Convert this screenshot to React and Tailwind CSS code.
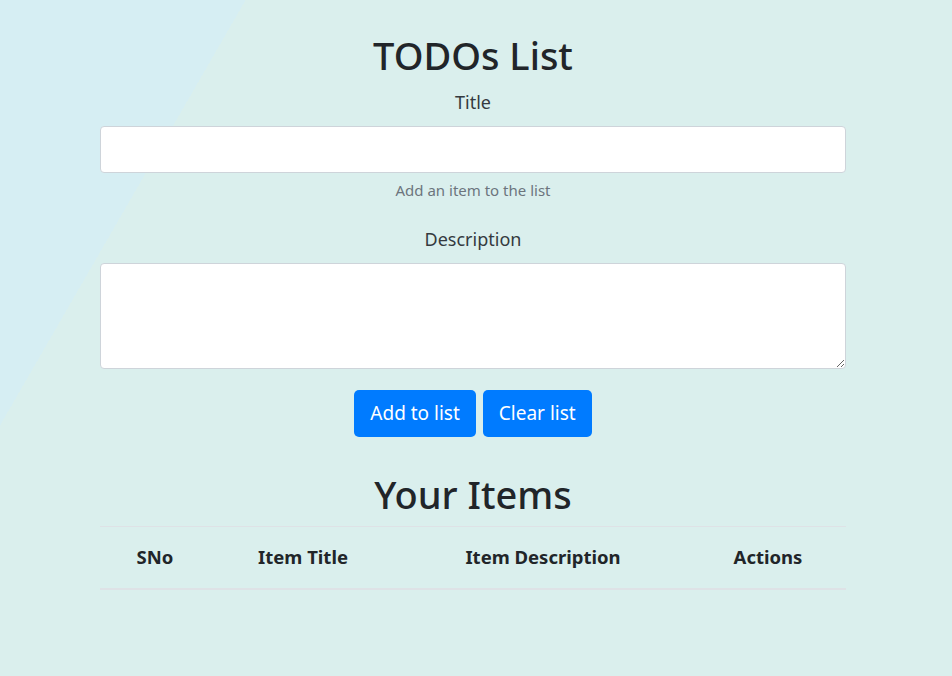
import React from 'react';

export default function App() {
  return (
    <div
      className="min-h-screen h-[676px] w-full bg-[linear-gradient(120deg,#d6eef3_18.3%,#daefed_18.3%)] text-[#212529]"
      style={{ fontFamily: '"Segoe UI", "Noto Sans", sans-serif' }}
    >
      <div className="ml-[100px] w-[746px] pt-[31px] text-center">
        <h1 className="text-[38px] leading-[48px] font-medium">TODOs List</h1>

        <label className="mt-[11px] block text-lg leading-6 text-[#343a40]">Title</label>
        <input
          type="text"
          className="mt-3 block h-[47px] w-full rounded border border-[#ced4da] bg-white px-3"
        />
        <small className="mt-[7px] block text-[15px] leading-[21px] text-[#6c757d]">
          Add an item to the list
        </small>

        <label className="mt-[26px] block text-lg leading-6 text-[#343a40]">Description</label>
        <textarea className="mt-3 block h-[106px] w-full rounded border border-[#ced4da] bg-white px-3" />

        <div className="mt-[21px] flex justify-center gap-[7px]">
          <button className="h-[47px] rounded-[5px] bg-[#007bff] px-4 text-[19px] text-white">Add to list</button>
          <button className="h-[47px] rounded-[5px] bg-[#007bff] px-4 text-[19px] text-white">Clear list</button>
        </div>

        <h2 className="mt-[33px] text-[38px] leading-[48px] font-medium">Your Items</h2>

        <table className="mt-2 w-full border-collapse">
          <thead>
            <tr className="h-[62px] border-t border-b-2 border-[#dee2e6] text-[18.5px] font-bold">
              <th className="w-[110px]">SNo</th>
              <th className="w-[186px]">Item Title</th>
              <th className="w-[294px]">Item Description</th>
              <th className="w-[156px]">Actions</th>
            </tr>
          </thead>
          <tbody></tbody>
        </table>
      </div>
    </div>
  );
}
